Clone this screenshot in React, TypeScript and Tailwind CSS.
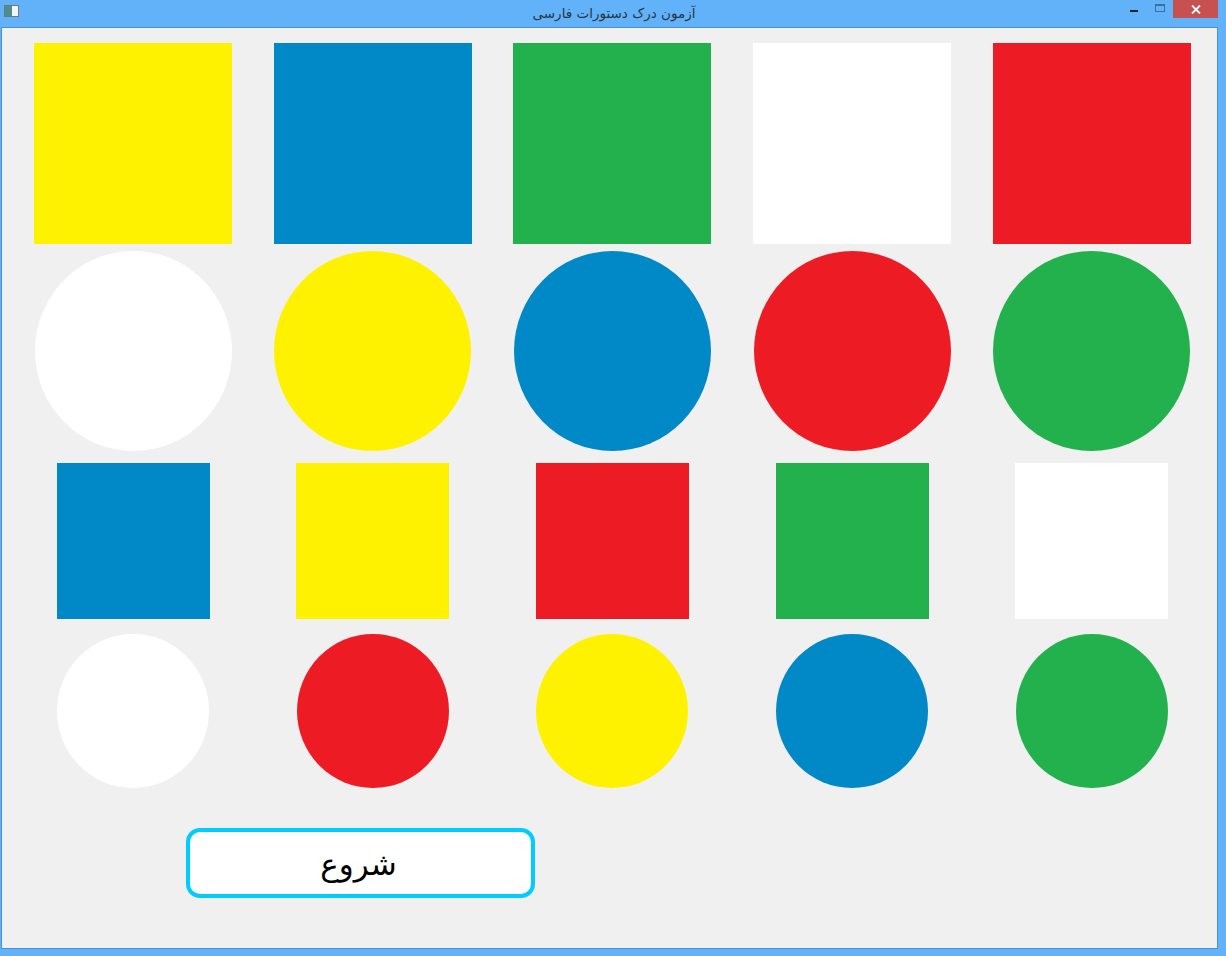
import React from 'react';

const YELLOW = 'bg-[#fff200]';
const BLUE = 'bg-[#0089c6]';
const GREEN = 'bg-[#22b14c]';
const WHITE = 'bg-white';
const RED = 'bg-[#ed1c24]';

const bigSquares = [YELLOW, BLUE, GREEN, WHITE, RED];
const bigCircles = [WHITE, YELLOW, BLUE, RED, GREEN];
const smallSquares = [BLUE, YELLOW, RED, GREEN, WHITE];
const smallCircles = [WHITE, RED, YELLOW, BLUE, GREEN];

const TitleBar: React.FC = () => (
  <div className="relative h-[27px] flex items-center justify-center">
    <div className="absolute left-[4px] top-[5px] w-[15px] h-[12px] border border-[#6a7a8a] bg-[#f4f4f4] flex">
      <div className="w-[7px] h-full bg-[#4f8f8a]" />
    </div>
    <span
      dir="rtl"
      className="ml-[2px] text-[13.5px] text-[#2a3540] -mt-[1px]"
      style={{ fontFamily: '"DejaVu Sans", Tahoma, sans-serif' }}
    >
      آزمون درک دستورات فارسی
    </span>
    <div className="absolute right-[8px] top-0 flex items-start">
      <div className="w-[26px] h-[18px] flex items-center justify-center">
        <div className="w-[8px] h-[2px] bg-[#222] mt-[3px]" />
      </div>
      <div className="w-[26px] h-[18px] flex items-start justify-center pt-[4px]">
        <div className="w-[10px] h-[8px] border border-[#3d6f9a] border-t-2" />
      </div>
      <div className="w-[45px] h-[18px] bg-[#c75050] flex items-center justify-center">
        <svg width="10" height="9" viewBox="0 0 10 9">
          <path d="M1 0.5 L9 8.5 M9 0.5 L1 8.5" stroke="white" strokeWidth="1.8" />
        </svg>
      </div>
    </div>
  </div>
);

const Row: React.FC<{ colors: string[]; shape: string; className?: string }> = ({ colors, shape, className = '' }) => (
  <div className={`grid grid-cols-5 justify-items-center ${className}`}>
    {colors.map((c, i) => (
      <div key={i} className={`${shape} ${c}`} />
    ))}
  </div>
);

export default function App() {
  return (
    <div className="w-[1226px] h-[956px] bg-[#62b2fa] flex flex-col overflow-hidden">
      <TitleBar />
      <div className="ml-[1px] mr-[8px] h-[922px] border border-[#4a90d8] bg-[#f0f0f0]">
        <div className="ml-[11.5px] w-[1198px] pt-[15px]">
          <Row colors={bigSquares} shape="w-[198px] h-[201px]" />
          <Row colors={bigCircles} shape="w-[197px] h-[200px] rounded-[50%]" className="mt-[7px]" />
          <Row colors={smallSquares} shape="w-[153px] h-[156px]" className="mt-[12px]" />
          <Row colors={smallCircles} shape="w-[152px] h-[154px] rounded-[50%]" className="mt-[15px]" />
        </div>
        <div className="ml-[184px] mt-[40px] w-[349px] h-[70px] rounded-[14px] border-[4px] border-[#00ccff] bg-white flex items-center justify-center">
          <span
            dir="rtl"
            className="text-[31px] text-black leading-none -ml-[4px] mt-[2px]"
            style={{ fontFamily: '"DejaVu Sans", Tahoma, sans-serif' }}
          >
            شروع
          </span>
        </div>
      </div>
    </div>
  );
}
